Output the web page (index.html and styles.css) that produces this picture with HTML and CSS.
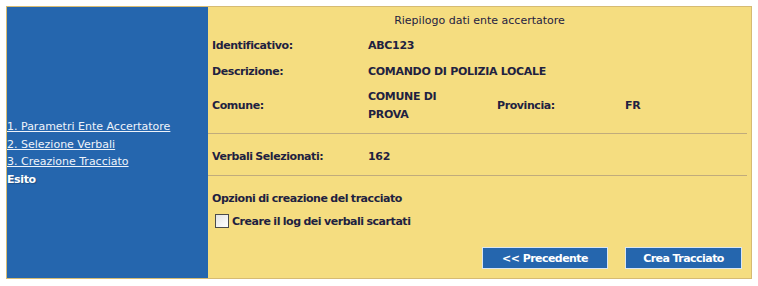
FILE: index.html
```html
<!DOCTYPE html>
<html lang="it">
<head>
    <meta charset="UTF-8">
    <title>Creazione Tracciato - Riepilogo</title>
    <link rel="stylesheet" href="styles.css">
</head>
<body>

    <div class="pagina">
        <!-- Menu laterale -->
        <div class="menu">
            <a href="#">1. Parametri Ente Accertatore</a>
            <a href="#">2. Selezione Verbali</a>
            <a href="#">3. Creazione Tracciato</a>
            <span class="corrente">Esito</span>
        </div>

        <!-- Riepilogo -->
        <div class="contenuto">
            <div class="titolo">Riepilogo dati ente accertatore</div>

            <div class="dati">
                <div class="riga">
                    <span class="etichetta">Identificativo:</span>
                    <span class="valore">ABC123</span>
                </div>
                <div class="riga">
                    <span class="etichetta">Descrizione:</span>
                    <span class="valore lungo">COMANDO DI POLIZIA LOCALE</span>
                </div>
                <div class="riga alta">
                    <span class="etichetta">Comune:</span>
                    <span class="valore stretto">COMUNE DI PROVA</span>
                    <span class="etichetta">Provincia:</span>
                    <span class="valore">FR</span>
                </div>
            </div>

            <hr>

            <div class="dati">
                <div class="riga verbali">
                    <span class="etichetta">Verbali Selezionati:</span>
                    <span class="valore">162</span>
                </div>
            </div>

            <hr class="secondo">

            <div class="opzioni">
                <div class="sottotitolo">Opzioni di creazione del tracciato</div>
                <label class="scelta">
                    <input type="checkbox" id="logScartati">
                    Creare il log dei verbali scartati
                </label>
            </div>

            <div class="azioni">
                <button class="btn" id="btnPrecedente">&lt;&lt; Precedente</button>
                <button class="btn" id="btnCrea">Crea Tracciato</button>
            </div>
        </div>
    </div>

</body>
</html>
```

FILE: styles.css
```css
* {
    margin: 0;
    padding: 0;
    box-sizing: border-box;
}
body {
    background-color: #ffffff;
    font-family: 'DejaVu Sans', Verdana, sans-serif;
    font-size: 11px;
    color: #1f2240;
}
.pagina {
    display: flex;
    margin: 6px 0 0 6px;
    width: 746px;
    height: 273px;
    border: 1px solid #d6bb73;
}
.menu {
    width: 201px;
    background-color: #2566ae;
    display: flex;
    flex-direction: column;
    padding-top: 111px;
}
.menu a,
.menu span {
    line-height: 17.7px;
    color: #eef3fa;
}
.menu a {
    text-decoration: underline;
}
.menu .corrente {
    font-weight: bold;
    color: #ffffff;
    letter-spacing: -0.4px;
    text-shadow: 1px 1px 1px rgba(0, 0, 0, 0.25);
}
.contenuto {
    flex: 1;
    background-color: #f5dd80;
    display: flex;
    flex-direction: column;
}
.titolo {
    text-align: center;
    padding-top: 2px;
    line-height: 23px;
    height: 25px;
}
.riga {
    display: grid;
    grid-template-columns: 156px 129px 128px 1fr;
    align-items: center;
    height: 26px;
    padding-left: 4px;
    font-weight: bold;
}
.riga.alta {
    height: 42px;
    line-height: 18px;
    padding-top: 2px;
}
.riga.verbali {
    height: 28px;
}
.etichetta {
    letter-spacing: -0.42px;
    word-spacing: -0.8px;
}
.valore {
    letter-spacing: -0.3px;
}
.valore.lungo {
    grid-column: span 3;
}
.valore.stretto {
    max-width: 90px;
}
hr {
    border: none;
    border-top: 1px solid #c0ab7c;
    margin: 7px 4px 8px 0;
}
hr.secondo {
    margin-top: 5px;
}
.opzioni {
    margin-top: 4px;
    padding-left: 4px;
    font-weight: bold;
    letter-spacing: -0.45px;
    word-spacing: -0.6px;
}
.sottotitolo {
    line-height: 22px;
}
.scelta {
    display: flex;
    align-items: center;
    gap: 3px;
    height: 22px;
    padding-left: 3px;
}
.scelta input {
    appearance: none;
    width: 14px;
    height: 14px;
    border: 1px solid #4b4b4b;
    background: linear-gradient(135deg, #e4e4e4, #ffffff);
}
.azioni {
    display: flex;
    justify-content: flex-end;
    gap: 17px;
    margin-top: 15px;
    padding-right: 9px;
}
.btn {
    height: 22px;
    border: 1px solid #d9e6f3;
    background-color: #2566ae;
    color: #ffffff;
    font-family: 'DejaVu Sans', Verdana, sans-serif;
    font-size: 11px;
    font-weight: bold;
    letter-spacing: -0.55px;
    cursor: pointer;
}
#btnPrecedente {
    width: 126px;
}
#btnCrea {
    width: 117px;
}
```
